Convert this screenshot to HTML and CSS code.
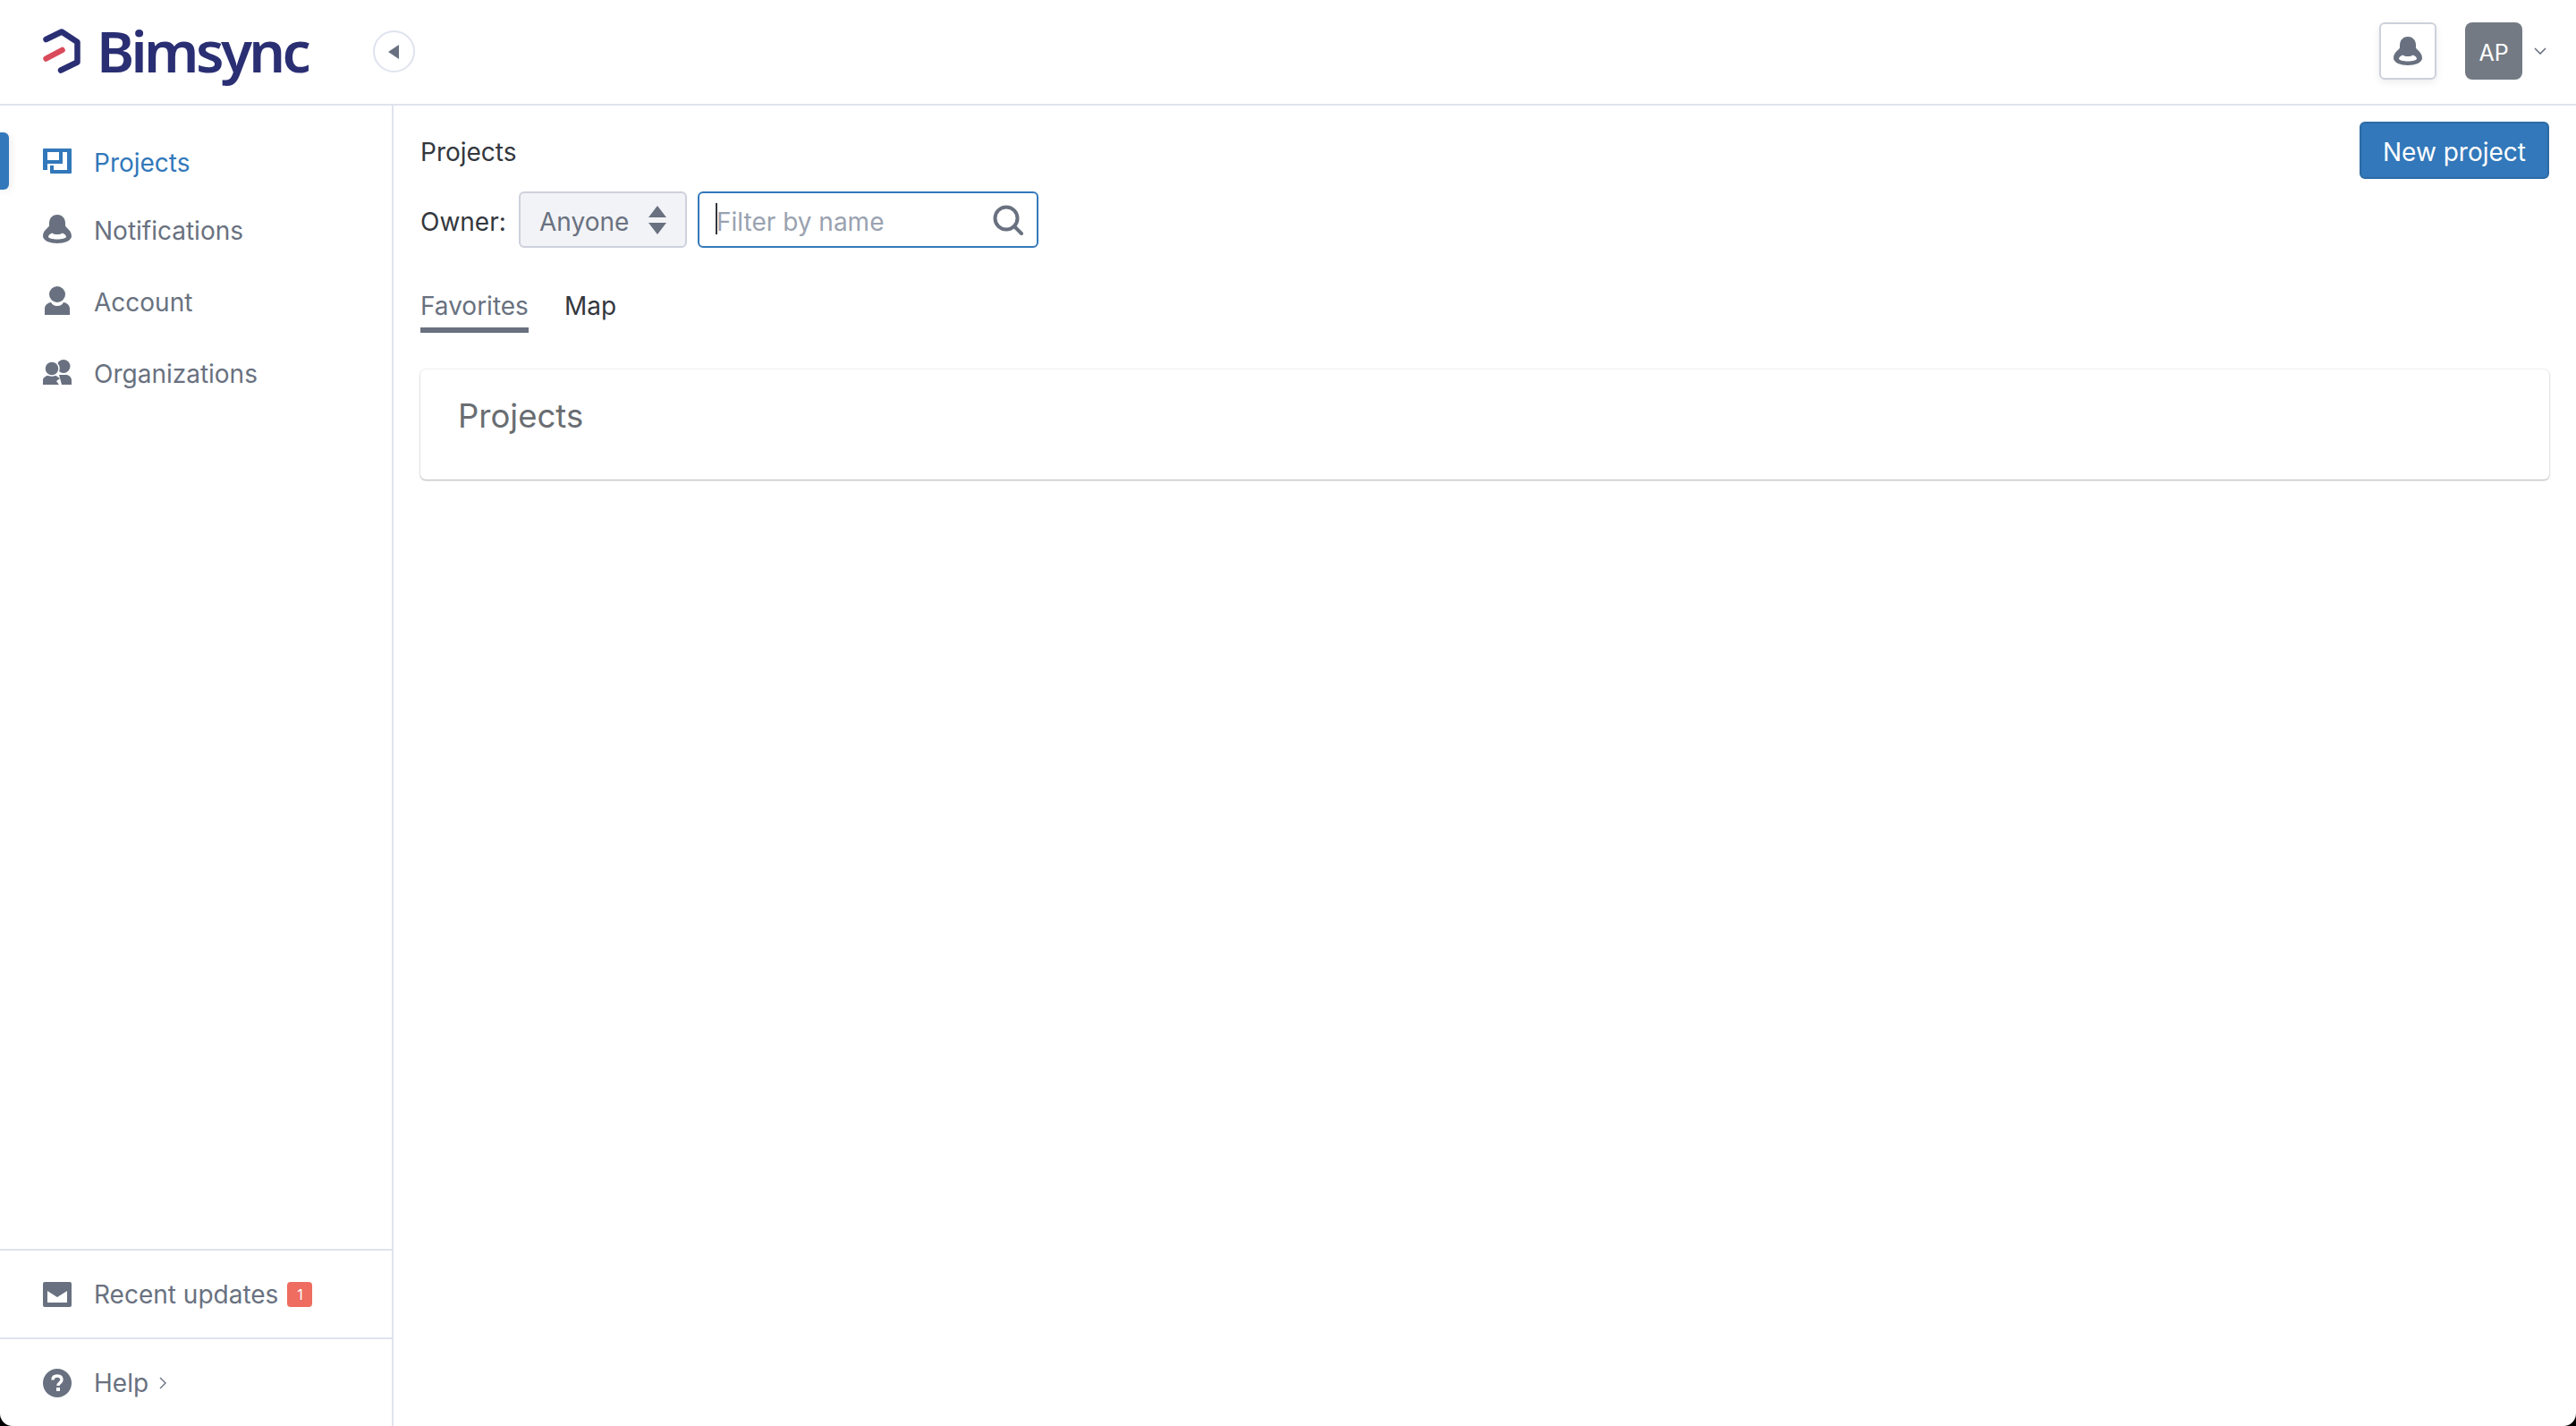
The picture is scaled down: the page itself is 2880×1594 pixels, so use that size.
FILE: index.html
```html
<!DOCTYPE html>
<html lang="en">
<head>
<meta charset="utf-8">
<title>Bimsync</title>
<link rel="stylesheet" href="styles.css">
</head>
<body>
<div class="app">
  <header class="topbar">
    <a class="logo">
      <svg class="logo-mark" viewBox="0 0 42 50" width="42" height="50"><path d="M3.5 12 21 3.5 38.500 15V37.500L20 46.500" fill="none" stroke="#2a2f73" stroke-width="6.500" stroke-linecap="round" stroke-linejoin="round"/><path d="M3.500 33.500 21.500 24" fill="none" stroke="#d94a5a" stroke-width="6.500" stroke-linecap="round"/></svg>
      <span class="logo-text">Bimsync</span>
    </a>
    <button class="collapse"><svg viewBox="0 0 12 16" width="12" height="16"><path d="M12 0V16L0 8Z" fill="#697180"/></svg></button>
    <div class="top-actions">
      <button class="bell-btn">
        <svg viewBox="0 0 32 32" width="32" height="32"><use href="#bell"/></svg>
      </button>
      <div class="avatar">AP</div>
      <svg class="avatar-caret" viewBox="0 0 14 8" width="14" height="8"><path d="M1 1 7 7 13 1" fill="none" stroke="#697180" stroke-width="1.6"/></svg>
    </div>
  </header>
  <div class="body">
    <aside class="sidebar">
      <nav class="nav">
        <a class="nav-item active">
          <svg class="nav-icon" viewBox="0 0 32 28" width="32" height="28"><path fill-rule="evenodd" d="M1 0H31A1 1 0 0 1 32 1V27A1 1 0 0 1 31 28H9A1 1 0 0 1 8 27V19H12V24H27V4H22V17H5V24H0V1A1 1 0 0 1 1 0ZM5 4V13H18V4Z" fill="#3278ba"/></svg>
          <span class="label">Projects</span>
        </a>
        <a class="nav-item">
          <svg class="nav-icon" viewBox="0 0 32 32" width="32" height="32"><use href="#bell"/></svg>
          <span class="label">Notifications</span>
        </a>
        <a class="nav-item">
          <svg class="nav-icon" viewBox="0 0 32 32" width="32" height="32"><circle cx="16" cy="9" r="9" fill="#697180"/><path d="M2 32V25C2 21 6 18 9 18 11 21 13 22 16 22S21 21 23 18C26 18 30 21 30 25V32Z" fill="#697180"/></svg>
          <span class="label">Account</span>
        </a>
        <a class="nav-item">
          <svg class="nav-icon" viewBox="0 0 32 28" width="32" height="28"><circle cx="23" cy="7.500" r="7.500" fill="#697180"/><path d="M21 28 18 17H27C30 18 32 20 32 23V28Z" fill="#697180"/><path d="M0 28V23C0 20 3 18.500 6 17.500H14L19 21 15 24 18 28Z" fill="#697180"/><circle cx="10" cy="10" r="8" fill="#697180" stroke="#fff" stroke-width="1.500"/></svg>
          <span class="label">Organizations</span>
        </a>
      </nav>
      <div class="side-footer">
        <a class="foot-item">
          <svg class="nav-icon" viewBox="0 0 32 28" width="32" height="28"><path fill-rule="evenodd" d="M2 0H30A2 2 0 0 1 32 2V26A2 2 0 0 1 30 28H2A2 2 0 0 1 0 26V2A2 2 0 0 1 2 0ZM5 10V23H27V10L16 17Z" fill="#697180"/></svg>
          <span>Recent updates</span>
          <span class="badge">1</span>
        </a>
        <a class="foot-item">
          <svg class="nav-icon" viewBox="0 0 32 32" width="32" height="32"><circle cx="16" cy="16" r="16" fill="#697180"/><path d="M11 12.500C11 9.500 13 8 16 8S21 9.500 21 12.300C21 15.800 17 15.800 17 19" fill="none" stroke="#fff" stroke-width="3.400"/><rect x="15" y="21" width="4" height="4" fill="#fff"/></svg>
          <span>Help</span>
          <svg class="help-caret" viewBox="0 0 8 14" width="8" height="14"><path d="M1 1 7 7 1 13" fill="none" stroke="#697180" stroke-width="1.400"/></svg>
        </a>
      </div>
    </aside>
    <main class="main">
      <div class="title-row">
        <div class="crumb">Projects</div>
        <button class="primary">New project</button>
      </div>
      <div class="filters">
        <label class="owner">Owner:</label>
        <div class="select">
          <span class="field-text">Anyone</span>
          <svg viewBox="0 0 20 32" width="20" height="32"><path d="M10 0 20 13H0Z" fill="#697180"/><path d="M10 32 0 19H20Z" fill="#697180"/></svg>
        </div>
        <div class="search">
          <span class="caret"></span>
          <span class="placeholder">Filter by name</span>
          <svg class="search-icon" viewBox="0 0 34 34" width="34" height="34"><circle cx="15" cy="15" r="12.500" fill="none" stroke="#697180" stroke-width="4"/><path d="M24 24 32 32" stroke="#697180" stroke-width="4" stroke-linecap="round"/></svg>
        </div>
      </div>
      <div class="tabs">
        <a class="tab selected">Favorites</a>
        <a class="tab">Map</a>
      </div>
      <section class="card">
        <h2>Projects</h2>
      </section>
    </main>
  </div>
</div>
<svg class="defs" width="0" height="0"><defs><g id="bell"><path d="M16 0C22 0 25 4.500 25 9.500V12C25 14.500 32 17 32 24 32 29 24 32 16 32S0 29 0 24C0 17 7 14.500 7 12V9.500C7 4.500 10 0 16 0Z" fill="#697180"/><path d="M6 24.500C6 23 8 21.500 10.500 20.500 12.500 22.500 19.500 22.500 21.500 20.500 24 21.500 26 23 26 24.500 26 26.500 21 27.500 16 27.500S6 26.500 6 24.500Z" fill="#fff"/></g></defs></svg>
</body>
</html>
```
FILE: styles.css
```css
* { box-sizing: border-box; }
html { height: 100%; background: #000; }
body {
  margin: 0;
  height: 100%;
  font-family: Inter, "Liberation Sans", sans-serif;
  font-size: 28px;
  letter-spacing: 0;
  color: #33373d;
}
button { font: inherit; letter-spacing: inherit; padding: 0; }
.app {
  height: 1594px;
  display: flex;
  flex-direction: column;
  background: #fff;
  border-radius: 0 0 14px 14px;
  overflow: hidden;
}
.defs { position: absolute; }
.label { padding-top: 3px; }
.field-text { padding-top: 4px; }

.topbar {
  position: relative;
  flex: 0 0 118px;
  display: flex;
  align-items: center;
  justify-content: space-between;
  border-bottom: 2px solid #dfe3ee;
  padding: 0 33px 2px 48px;
}
.logo { display: flex; align-items: center; gap: 18px; color: #2a2f73; }
.logo-text {
  font-family: "Noto Sans", sans-serif;
  font-size: 64px;
  font-weight: 600;
  letter-spacing: -3.6px;
  line-height: 70px;
}
.collapse {
  position: absolute;
  left: 417px;
  top: 34px;
  width: 47px;
  height: 47px;
  border-radius: 50%;
  background: #fff;
  border: 2px solid #dfe3ee;
  display: flex;
  align-items: center;
  justify-content: center;
  padding-right: 2px;
  z-index: 2;
}
.top-actions { display: flex; align-items: center; }
.bell-btn {
  width: 64px;
  height: 64px;
  border: 2px solid #cdd1dc;
  border-radius: 6px;
  background: #fff;
  box-shadow: 0 3px 8px rgba(0,0,0,.08);
  display: flex;
  align-items: center;
  justify-content: center;
  margin-right: 32px;
}
.avatar {
  width: 64px;
  height: 64px;
  border-radius: 8px;
  background: #737a84;
  color: #fff;
  display: flex;
  align-items: center;
  justify-content: center;
  font-size: 25px;
  padding-top: 3px;
  margin-right: 13px;
}

.body { flex: 1; display: flex; min-height: 0; }
.sidebar {
  flex: 0 0 440px;
  display: flex;
  flex-direction: column;
  justify-content: space-between;
  border-right: 2px solid #dfe3ee;
  padding-top: 30px;
  color: #697180;
}
.nav-item {
  position: relative;
  height: 80px;
  display: flex;
  align-items: center;
  padding-left: 48px;
}
.nav-icon { flex: none; margin-right: 25px; }
.nav-item.active { height: 64px; margin-bottom: 4px; color: #3278ba; }
.nav-item.active::before {
  content: "";
  position: absolute;
  left: 0;
  top: 0;
  width: 10px;
  height: 64px;
  background: #3278ba;
  border-radius: 0 6px 6px 0;
  box-shadow: 2px 2px 8px rgba(0,0,0,.08);
}
.foot-item {
  height: 99px;
  display: flex;
  align-items: center;
  padding-left: 48px;
  border-top: 2px solid #dfe3ee;
}
.badge {
  width: 28px;
  height: 28px;
  margin-left: 10px;
  background: #ee6c60;
  color: #fff;
  font-size: 16px;
  border-radius: 4px;
  display: flex;
  align-items: center;
  justify-content: center;
}
.help-caret { margin-left: 12px; }

.main { flex: 1; padding: 18px 30px 0; min-width: 0; }
.title-row {
  display: flex;
  justify-content: space-between;
  align-items: center;
  height: 64px;
}
.crumb { padding-top: 3px; }
.primary {
  width: 212px;
  height: 64px;
  padding-top: 3px;
  color: #fff;
  background: #3278ba;
  border: 2px solid #2d6ba5;
  border-radius: 6px;
}
.filters {
  display: flex;
  align-items: center;
  height: 63px;
  margin-top: 14px;
}
.owner { flex: 0 0 110px; padding-top: 4px; }
.select {
  width: 188px;
  height: 63px;
  background: #f2f3f6;
  border: 2px solid #cdd1dc;
  border-radius: 6px;
  color: #697180;
  display: flex;
  align-items: center;
  justify-content: space-between;
  padding: 0 21px;
  margin-right: 12px;
}
.search {
  position: relative;
  width: 381px;
  height: 63px;
  border: 2px solid #3278ba;
  border-radius: 6px;
  display: flex;
  align-items: center;
  justify-content: space-between;
  padding: 0 15px 0 19px;
}
.caret {
  position: absolute;
  left: 18px;
  top: 11px;
  width: 2px;
  height: 35px;
  background: #33373d;
}
.placeholder { color: #9aa2b0; padding-top: 4px; }
.tabs { display: flex; gap: 40px; margin-top: 36px; }
.tab {
  height: 59px;
  line-height: 58px;
  color: #33373d;
}
.tab.selected { color: #697180; border-bottom: 6px solid #697180; }
.card {
  margin-top: 41px;
  height: 123px;
  border-radius: 6px;
  padding: 28px 42px;
  background: #fff;
  box-shadow: 0 1px 2px rgba(0,0,0,.28), 0 0 3px rgba(0,0,0,.1);
}
.card h2 {
  margin: 0;
  font-size: 36.5px;
  font-weight: 400;
  line-height: 48px;
  color: #696d72;
}
```
